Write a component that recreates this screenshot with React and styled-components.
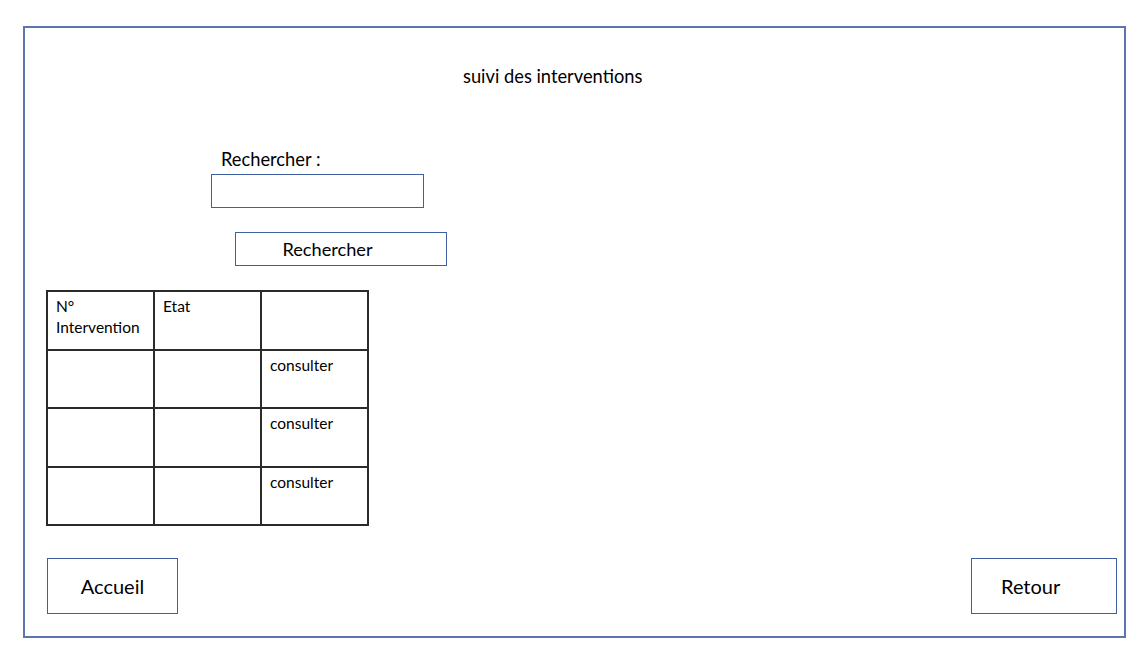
import React from "react";
import styled, { createGlobalStyle } from "styled-components";

const Global = createGlobalStyle`
  html, body { margin: 0; padding: 0; background: #fff; }
  body { font-family: Lato, "Open Sans", "Liberation Sans", sans-serif; color: #000; }
`;

const Frame = styled.div`
  box-sizing: border-box;
  margin: 26px 0 0 23px;
  width: 1103px;
  height: 612px;
  border: 2px solid #5b74b2;
  display: flex;
  flex-direction: column;
  align-items: flex-start;
`;

const Title = styled.h1`
  margin: 38px 0 0 438px;
  font-size: 18.3px;
  font-weight: 400;
  line-height: 20px;
`;

const SearchLabel = styled.label`
  margin: 63px 0 0 196px;
  font-size: 18.3px;
  line-height: 20px;
`;

const SearchInput = styled.input`
  box-sizing: border-box;
  margin: 5px 0 0 186px;
  width: 213px;
  height: 34px;
  border: 1px solid #3f5fa3;
  outline: none;
  font: inherit;
`;

const SearchButton = styled.button`
  box-sizing: border-box;
  margin: 24px 0 0 210px;
  width: 212px;
  height: 34px;
  border: 1px solid #3f5fa3;
  background: #fff;
  font-family: inherit;
  font-size: 18.2px;
  padding: 0 27px 0 0;
  color: #000;
`;

const Grid = styled.table`
  margin: 24px 0 0 21px;
  border-collapse: collapse;
  font-size: 15.5px;
`;

const Cell = styled.td`
  box-sizing: border-box;
  border: 2px solid #2b2b2b;
  width: 107px;
  height: 58.5px;
  padding: 4px 8px;
  vertical-align: top;
  line-height: 21px;
`;

const Footer = styled.div`
  margin-top: auto;
  margin-bottom: 22px;
  align-self: stretch;
  display: flex;
  justify-content: space-between;
  padding: 0 7px 0 22px;
`;

const NavButton = styled.button`
  box-sizing: border-box;
  width: ${(p) => p.$w}px;
  height: 56px;
  border: 1px solid #3f5fa3;
  background: #fff;
  font-family: inherit;
  font-size: 20px;
  color: #000;
  text-align: ${(p) => (p.$left ? "left" : "center")};
  padding: ${(p) => (p.$left ? "0 0 0 29px" : "0")};
`;

export default function App() {
  const rows = [0, 1, 2];
  return (
    <>
      <Global />
      <Frame>
        <Title>suivi des interventions</Title>
        <SearchLabel>Rechercher :</SearchLabel>
        <SearchInput />
        <SearchButton>Rechercher</SearchButton>
        <Grid>
          <tbody>
            <tr>
              <Cell>N°<br />Intervention</Cell>
              <Cell>Etat</Cell>
              <Cell />
            </tr>
            {rows.map((r) => (
              <tr key={r}>
                <Cell />
                <Cell />
                <Cell>consulter</Cell>
              </tr>
            ))}
          </tbody>
        </Grid>
        <Footer>
          <NavButton $w={131}>Accueil</NavButton>
          <NavButton $w={146} $left>Retour</NavButton>
        </Footer>
      </Frame>
    </>
  );
}
